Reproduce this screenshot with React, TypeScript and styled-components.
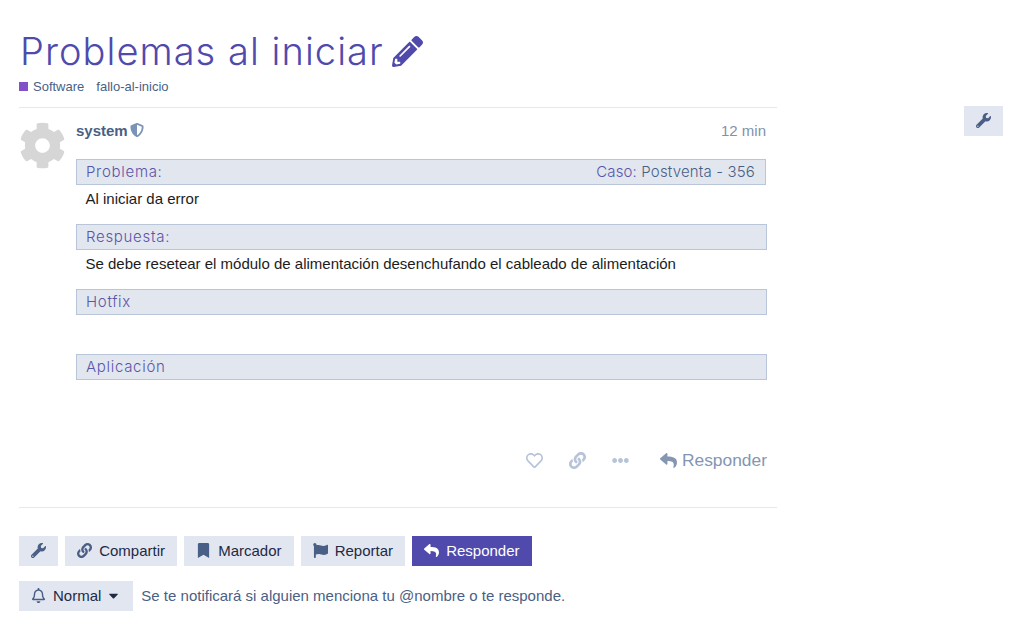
import React from "react";
import styled, { createGlobalStyle } from "styled-components";
import {
  FaPencilAlt, FaWrench, FaLink, FaBookmark, FaFlag, FaReply, FaRegHeart,
  FaEllipsisH, FaCog, FaShieldAlt, FaRegBell, FaCaretDown,
} from "react-icons/fa";

const Global = createGlobalStyle`
  html, body { margin: 0; padding: 0; background: #fff; }
  body { font-family: "Liberation Sans", Arial, sans-serif; font-size: 15px; color: #222; }
`;

const Page = styled.div`
  width: 1024px;
  height: 624px;
  overflow: hidden;
  display: flex;
  justify-content: space-between;
  padding: 0 21px 0 19px;
  box-sizing: border-box;
`;
const Main = styled.main`
  width: 758px;
  display: flex;
  flex-direction: column;
`;
const Aside = styled.aside`
  padding-top: 106px;
`;
const TitleRow = styled.div`
  height: 47px;
  margin-top: 28px;
  display: flex;
  align-items: center;
  gap: 8px;
  padding-left: 1px;
`;
const Title = styled.h1`
  margin: 0;
  font-family: Inter, sans-serif;
  font-weight: 300;
  font-size: 38px;
  line-height: 47px;
  color: #4f4aac;
  letter-spacing: 1.05px;
`;
const EditIcon = styled(FaPencilAlt)`
  width: 31px;
  height: 31px;
  color: #4f4aac;
`;
const Tags = styled.div`
  height: 23px;
  margin-bottom: 9px;
  display: flex;
  align-items: center;
  font-size: 13px;
  color: #4a5f85;
`;
const Swatch = styled.span`
  width: 9px;
  height: 9px;
  background: #8350c9;
  margin-right: 5px;
`;
const Tag = styled.span`
  margin-right: 12px;
`;
const Rule = styled.hr`
  width: 100%;
  margin: 0;
  border: 0;
  border-top: 1px solid #e6e7ef;
`;
const Post = styled.article`
  display: flex;
  height: 399px;
`;
const Avatar = styled.div`
  width: 57px;
  padding-top: 14px;
  flex: none;
  color: #d6d6d6;
  font-size: 47px;
  line-height: 0;
`;
const PostBody = styled.div`
  flex: 1;
  padding-right: 10px;
  display: flex;
  flex-direction: column;
`;
const PostHead = styled.div`
  height: 51px;
  padding-top: 15px;
  box-sizing: border-box;
  display: flex;
  justify-content: space-between;
  align-items: flex-start;
  line-height: 16px;
`;
const UserName = styled.span`
  font-weight: 700;
  color: #4a5f85;
  display: inline-flex;
  align-items: center;
  gap: 3px;
  svg { color: #7c93b8; font-size: 14px; margin-top: -2px; margin-left: -1px; }
`;
const Time = styled.span`
  color: #7f92ad;
  font-size: 15px;
  margin-right: 1px;
`;
const Section = styled.section<{ $narrow?: boolean }>`
  height: 65px;
  margin-right: ${(p) => (p.$narrow ? "1px" : "0")};
`;
const SectionBar = styled.div`
  height: 26px;
  box-sizing: border-box;
  border: 1px solid #b9c5d8;
  background: #e2e6ee;
  display: flex;
  justify-content: space-between;
  align-items: center;
  padding: 0 10px 2px 9px;
  font-family: Inter, sans-serif;
  font-weight: 300;
  font-size: 15px;
  letter-spacing: 0.7px;
  color: #5a55ac;
`;
const CaseText = styled.span`
  color: #5a55ac;
  letter-spacing: 0.15px;
`;
const CaseValue = styled.span`
  color: #4a5f85;
  letter-spacing: 0.15px;
`;
const SectionText = styled.p`
  margin: 0;
  padding: 6px 10px 0 9.5px;
  font-size: 15px;
  line-height: 16px;
  color: #1c1c1c;
`;
const Actions = styled.div`
  margin-top: 25px;
  display: flex;
  align-items: center;
  justify-content: flex-end;
  height: 32px;
  color: #b6c3d9;
`;
const ActionIcon = styled.span`
  display: inline-flex;
  font-size: 17px;
  margin-right: 26px;
`;
const ReplyAction = styled.span`
  display: inline-flex;
  align-items: center;
  gap: 5px;
  color: #8496b2;
  font-size: 17.4px;
  margin-left: 5px;
  svg { font-size: 17px; }
`;
const Buttons = styled.div`
  display: flex;
  gap: 7.15px;
  margin-top: 28px;
`;
const Button = styled.button<{ $primary?: boolean }>`
  height: 30px;
  border: 0;
  margin: 0;
  padding: 0 12px 1px;
  display: inline-flex;
  align-items: center;
  gap: 7px;
  font-family: "Liberation Sans", Arial, sans-serif;
  font-size: 15px;
  color: ${(p) => (p.$primary ? "#fff" : "#1f2a44")};
  background: ${(p) => (p.$primary ? "#4f4aac" : "#e2e6f0")};
  svg { color: ${(p) => (p.$primary ? "#fff" : "#4a5f85")}; font-size: 15px; flex: none; }
`;
const Caret = styled(FaCaretDown)`
  &&& {
    color: #1f2a44;
    margin-left: -2px;
  }
`;
const NotifyRow = styled.div`
  display: flex;
  align-items: center;
  gap: 8px;
  margin-top: 15px;
`;
const NotifyText = styled.span`
  color: #4a5f85;
  font-size: 15px;
  padding-bottom: 2px;
`;

export default function App() {
  return (
    <>
      <Global />
      <Page>
        <Main>
          <TitleRow>
            <Title>Problemas al iniciar</Title>
            <EditIcon />
          </TitleRow>
          <Tags>
            <Swatch />
            <Tag>Software</Tag>
            <Tag>fallo-al-inicio</Tag>
          </Tags>
          <Rule />
          <Post>
            <Avatar><FaCog /></Avatar>
            <PostBody>
              <PostHead>
                <UserName>system <FaShieldAlt /></UserName>
                <Time>12 min</Time>
              </PostHead>
              <Section $narrow>
                <SectionBar>
                  <span>Problema:</span>
                  <span><CaseText>Caso: </CaseText><CaseValue>Postventa - 356</CaseValue></span>
                </SectionBar>
                <SectionText>Al iniciar da error</SectionText>
              </Section>
              <Section>
                <SectionBar>Respuesta:</SectionBar>
                <SectionText>Se debe resetear el módulo de alimentación desenchufando el cableado de alimentación</SectionText>
              </Section>
              <Section>
                <SectionBar>Hotfix</SectionBar>
              </Section>
              <Section>
                <SectionBar>Aplicación</SectionBar>
              </Section>
              <Actions>
                <ActionIcon><FaRegHeart /></ActionIcon>
                <ActionIcon><FaLink /></ActionIcon>
                <ActionIcon><FaEllipsisH /></ActionIcon>
                <ReplyAction><FaReply />Responder</ReplyAction>
              </Actions>
            </PostBody>
          </Post>
          <Rule />
          <Buttons>
            <Button aria-label="Admin"><FaWrench /></Button>
            <Button><FaLink />Compartir</Button>
            <Button><FaBookmark />Marcador</Button>
            <Button><FaFlag />Reportar</Button>
            <Button $primary><FaReply />Responder</Button>
          </Buttons>
          <NotifyRow>
            <Button><FaRegBell />Normal<Caret /></Button>
            <NotifyText>Se te notificará si alguien menciona tu @nombre o te responde.</NotifyText>
          </NotifyRow>
        </Main>
        <Aside>
          <Button aria-label="Admin"><FaWrench /></Button>
        </Aside>
      </Page>
    </>
  );
}
